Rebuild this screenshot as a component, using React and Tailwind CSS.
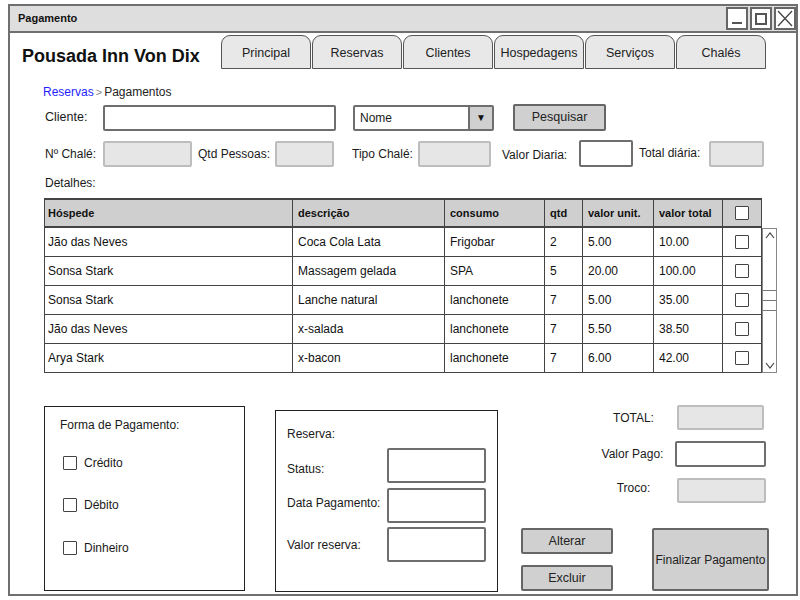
import React from "react";

const font = { fontFamily: '"Liberation Sans", Arial, sans-serif' };

function Tab({ label }) {
  return (
    <div className="w-[90px] h-[34px] rounded-t-[9px] border-[1.5px] border-[#555] bg-[#e8e8e8] flex items-center justify-center pt-[2px] text-[12.5px] text-[#222]">
      {label}
    </div>
  );
}

function Input({ w, h = 26, disabled, className = "" }) {
  return (
    <div
      className={
        (disabled
          ? "bg-[#e6e6e6] border-2 border-[#bdbdbd] "
          : "bg-white border-2 border-[#6e6e6e] ") +
        "rounded-[2px] shrink-0 " +
        className
      }
      style={{ width: w, height: h }}
    />
  );
}

function Check({ className = "" }) {
  return (
    <div className={"w-[14px] h-[14px] border-[1.5px] border-[#444] bg-white rounded-[1px] shrink-0 " + className} />
  );
}

function Btn({ children, className = "" }) {
  return (
    <div className={"bg-[#d0d0d0] border-2 border-[#666] rounded-[2px] flex items-center justify-center text-[12.5px] text-[#222] shrink-0 " + className}>
      {children}
    </div>
  );
}

const cols = [248, 152, 100, 38, 71, 69, 39];
const headers = ["Hóspede", "descrição", "consumo", "qtd", "valor unit.", "valor total"];
const rows = [
  ["Jão das Neves", "Coca Cola Lata", "Frigobar", "2", "5.00", "10.00"],
  ["Sonsa Stark", "Massagem gelada", "SPA", "5", "20.00", "100.00"],
  ["Sonsa Stark", "Lanche natural", "lanchonete", "7", "5.00", "35.00"],
  ["Jão das Neves", "x-salada", "lanchonete", "7", "5.50", "38.50"],
  ["Arya Stark", "x-bacon", "lanchonete", "7", "6.00", "42.00"],
];

function Cell({ w, i, children, bold }) {
  return (
    <div
      className={
        "border-r border-[#444] flex items-center " +
        (i === 0 ? "pl-[3px] " : "pl-[5px] ") +
        (bold ? "text-[11px] font-bold text-[#111]" : "text-[12px] text-[#111]")
      }
      style={{ width: w }}
    >
      {children}
    </div>
  );
}

export default function App() {
  return (
    <div className="w-[800px] h-[600px] bg-white pt-[4px] pl-[8px] text-[#1a1a1a]" style={font}>
      <div className="w-[790px] h-[592px] border-2 border-[#6f6f6f] flex flex-col">
        {/* Title bar */}
        <div className="h-[27px] bg-[#dedede] border-b-2 border-[#6f6f6f] flex items-center pl-[8px] shrink-0">
          <div className="text-[11px] font-bold text-[#111] flex-1">Pagamento</div>
          <div className="flex gap-[2px] items-center">
            <div className="w-[22px] h-[23px] bg-white border-2 border-[#666] flex items-end justify-center pb-[4px]">
              <div className="w-[10px] h-[2px] bg-[#555]" />
            </div>
            <div className="w-[22px] h-[23px] bg-white border-2 border-[#666] flex items-center justify-center">
              <div className="w-[12px] h-[12px] border-2 border-[#555]" />
            </div>
            <div className="w-[22px] h-[23px] bg-white border-2 border-[#666] flex items-center justify-center">
              <svg width="16" height="17" viewBox="0 0 16 17">
                <path d="M1 1 L15 16 M15 1 L1 16" stroke="#444" strokeWidth="1.3" fill="none" />
              </svg>
            </div>
          </div>
        </div>

        {/* Content */}
        <div className="flex-1 flex flex-col">
          {/* Header */}
          <div className="flex mt-[2px] pl-[12px] h-[34px]">
            <div className="w-[199px] pt-[10px] text-[18px] leading-[22px] font-bold text-[#111]">Pousada Inn Von Dix</div>
            <div className="flex gap-[1px]">
              {["Principal", "Reservas", "Clientes", "Hospedagens", "Serviços", "Chalés"].map((t) => (
                <Tab key={t} label={t} />
              ))}
            </div>
          </div>

          {/* Breadcrumb */}
          <div className="mt-[15px] pl-[33px] h-[16px] leading-[16px] text-[12px] flex items-center">
            <span className="text-[#1f1fff]">Reservas</span>
            <span className="text-[#888] mx-[2px] text-[11px]">&gt;</span>
            <span className="text-[#222]">Pagamentos</span>
          </div>

          <div className="pl-[34px] flex flex-col">
            {/* Row 1 */}
            <div className="mt-[4px] h-[27px] flex items-center text-[12.5px]">
              <div className="ml-[1px] w-[58px]">Cliente:</div>
              <Input w={233} h={26} />
              <div className="ml-[17px] w-[141px] h-[26px] border-2 border-[#6e6e6e] bg-white flex rounded-[2px] shrink-0">
                <div className="flex-1 pl-[5px] flex items-center text-[12px]">Nome</div>
                <div className="w-[24px] bg-[#d0d0d0] border-l-2 border-[#6e6e6e] flex items-center justify-center text-[10px] text-[#111]">▼</div>
              </div>
              <Btn className="ml-[19px] w-[93px] h-[27px]">Pesquisar</Btn>
            </div>

            {/* Row 2 */}
            <div className="mt-[9px] h-[27px] flex items-center text-[12px]">
              <div className="ml-[1px] w-[58px]">Nº Chalé:</div>
              <Input w={89} h={26} disabled />
              <div className="ml-[6px] w-[77px]">Qtd Pessoas:</div>
              <Input w={59} h={26} disabled />
              <div className="ml-[18px] w-[66px]">Tipo Chalé:</div>
              <Input w={73} h={26} disabled />
              <div className="ml-[11px] w-[77px] mt-[3px]">Valor Diaria:</div>
              <Input w={54} h={27} />
              <div className="ml-[6px] w-[70px] mt-[-2px]">Total diária:</div>
              <Input w={55} h={26} disabled />
            </div>

            {/* Detalhes */}
            <div className="mt-[8px] ml-[1px] h-[16px] leading-[16px] text-[12px]">Detalhes:</div>

            {/* Table */}
            <div className="mt-[7px] flex flex-col">
              <div className="flex h-[30px] w-[718px] bg-[#cfcfcf] border-l border-t-2 border-b-2 border-[#444]">
                {cols.map((w, i) => (
                  <Cell key={i} w={w} i={i} bold>
                    {i < 6 ? headers[i] : (
                      <div className="w-full flex justify-center pr-[5px]"><Check /></div>
                    )}
                  </Cell>
                ))}
              </div>
              <div className="flex">
                <div className="w-[718px] border-l border-[#444] flex flex-col">
                  {rows.map((r, ri) => (
                    <div key={ri} className="flex h-[29px] border-b border-[#444]">
                      {cols.map((w, i) => (
                        <Cell key={i} w={w} i={i}>
                          {i < 6 ? r[i] : (
                            <div className="w-full flex justify-center pr-[5px]"><Check /></div>
                          )}
                        </Cell>
                      ))}
                    </div>
                  ))}
                </div>
                <div className="w-[15px] h-[145px] border border-[#888] bg-white flex flex-col items-center justify-between py-[3px]">
                  <svg width="10" height="7" viewBox="0 0 10 7">
                    <polyline points="1,6 5,1 9,6" stroke="#444" strokeWidth="1.2" fill="none" />
                  </svg>
                  <div className="flex flex-col gap-[9px] w-[13px] self-start">
                    <div className="h-[1px] bg-[#777]" />
                    <div className="h-[1px] bg-[#777]" />
                    <div className="h-[1px] bg-[#777]" />
                  </div>
                  <svg width="10" height="7" viewBox="0 0 10 7">
                    <polyline points="1,1 5,6 9,1" stroke="#444" strokeWidth="1.2" fill="none" />
                  </svg>
                </div>
              </div>
            </div>

            {/* Bottom */}
            <div className="mt-[32px] flex items-start text-[12px]">
              <div className="mt-[1px] w-[201px] h-[185px] border border-[#222] pl-[15px] pt-[10px] shrink-0">
                <div className="h-[16px] leading-[16px]">Forma de Pagamento:</div>
                <div className="mt-[22px] h-[16px] flex items-center">
                  <Check className="ml-[3px]" />
                  <span className="ml-[7px]">Crédito</span>
                </div>
                <div className="mt-[26px] h-[16px] flex items-center">
                  <Check className="ml-[3px]" />
                  <span className="ml-[7px]">Débito</span>
                </div>
                <div className="mt-[27px] h-[16px] flex items-center">
                  <Check className="ml-[3px]" />
                  <span className="ml-[7px]">Dinheiro</span>
                </div>
              </div>

              <div className="ml-[30px] mt-[5px] w-[223px] h-[182px] border border-[#222] pl-[11px] pt-[15px] shrink-0">
                <div className="h-[16px] leading-[16px]">Reserva:</div>
                <div className="mt-[6px] h-[35px] flex items-center">
                  <div className="w-[100px] mt-[6px]">Status:</div>
                  <Input w={99} h={35} />
                </div>
                <div className="mt-[5px] h-[35px] flex items-center">
                  <div className="w-[100px] mt-[-5px]">Data Pagamento:</div>
                  <Input w={99} h={35} />
                </div>
                <div className="mt-[4px] h-[35px] flex items-center">
                  <div className="w-[100px]">Valor reserva:</div>
                  <Input w={99} h={35} />
                </div>
              </div>

              <div className="ml-[23px] w-[248px] flex flex-col shrink-0">
                <div className="h-[25px] flex items-center">
                  <div className="ml-[69px] w-[87px] text-center">TOTAL:</div>
                  <Input w={87} h={25} disabled />
                </div>
                <div className="mt-[11px] h-[26px] flex items-center">
                  <div className="ml-[69px] w-[85px] text-center">Valor Pago:</div>
                  <Input w={91} h={26} />
                </div>
                <div className="mt-[11px] h-[25px] flex items-center">
                  <div className="ml-[69px] w-[87px] text-center mt-[-6px]">Troco:</div>
                  <Input w={89} h={25} disabled />
                </div>
                <div className="mt-[25px] flex">
                  <div className="flex flex-col">
                    <Btn className="w-[92px] h-[26px]">Alterar</Btn>
                    <Btn className="mt-[11px] w-[92px] h-[26px]">Excluir</Btn>
                  </div>
                  <Btn className="ml-[39px] w-[117px] h-[63px] text-[12px]">Finalizar Pagamento</Btn>
                </div>
              </div>
            </div>
          </div>
        </div>
      </div>
    </div>
  );
}
